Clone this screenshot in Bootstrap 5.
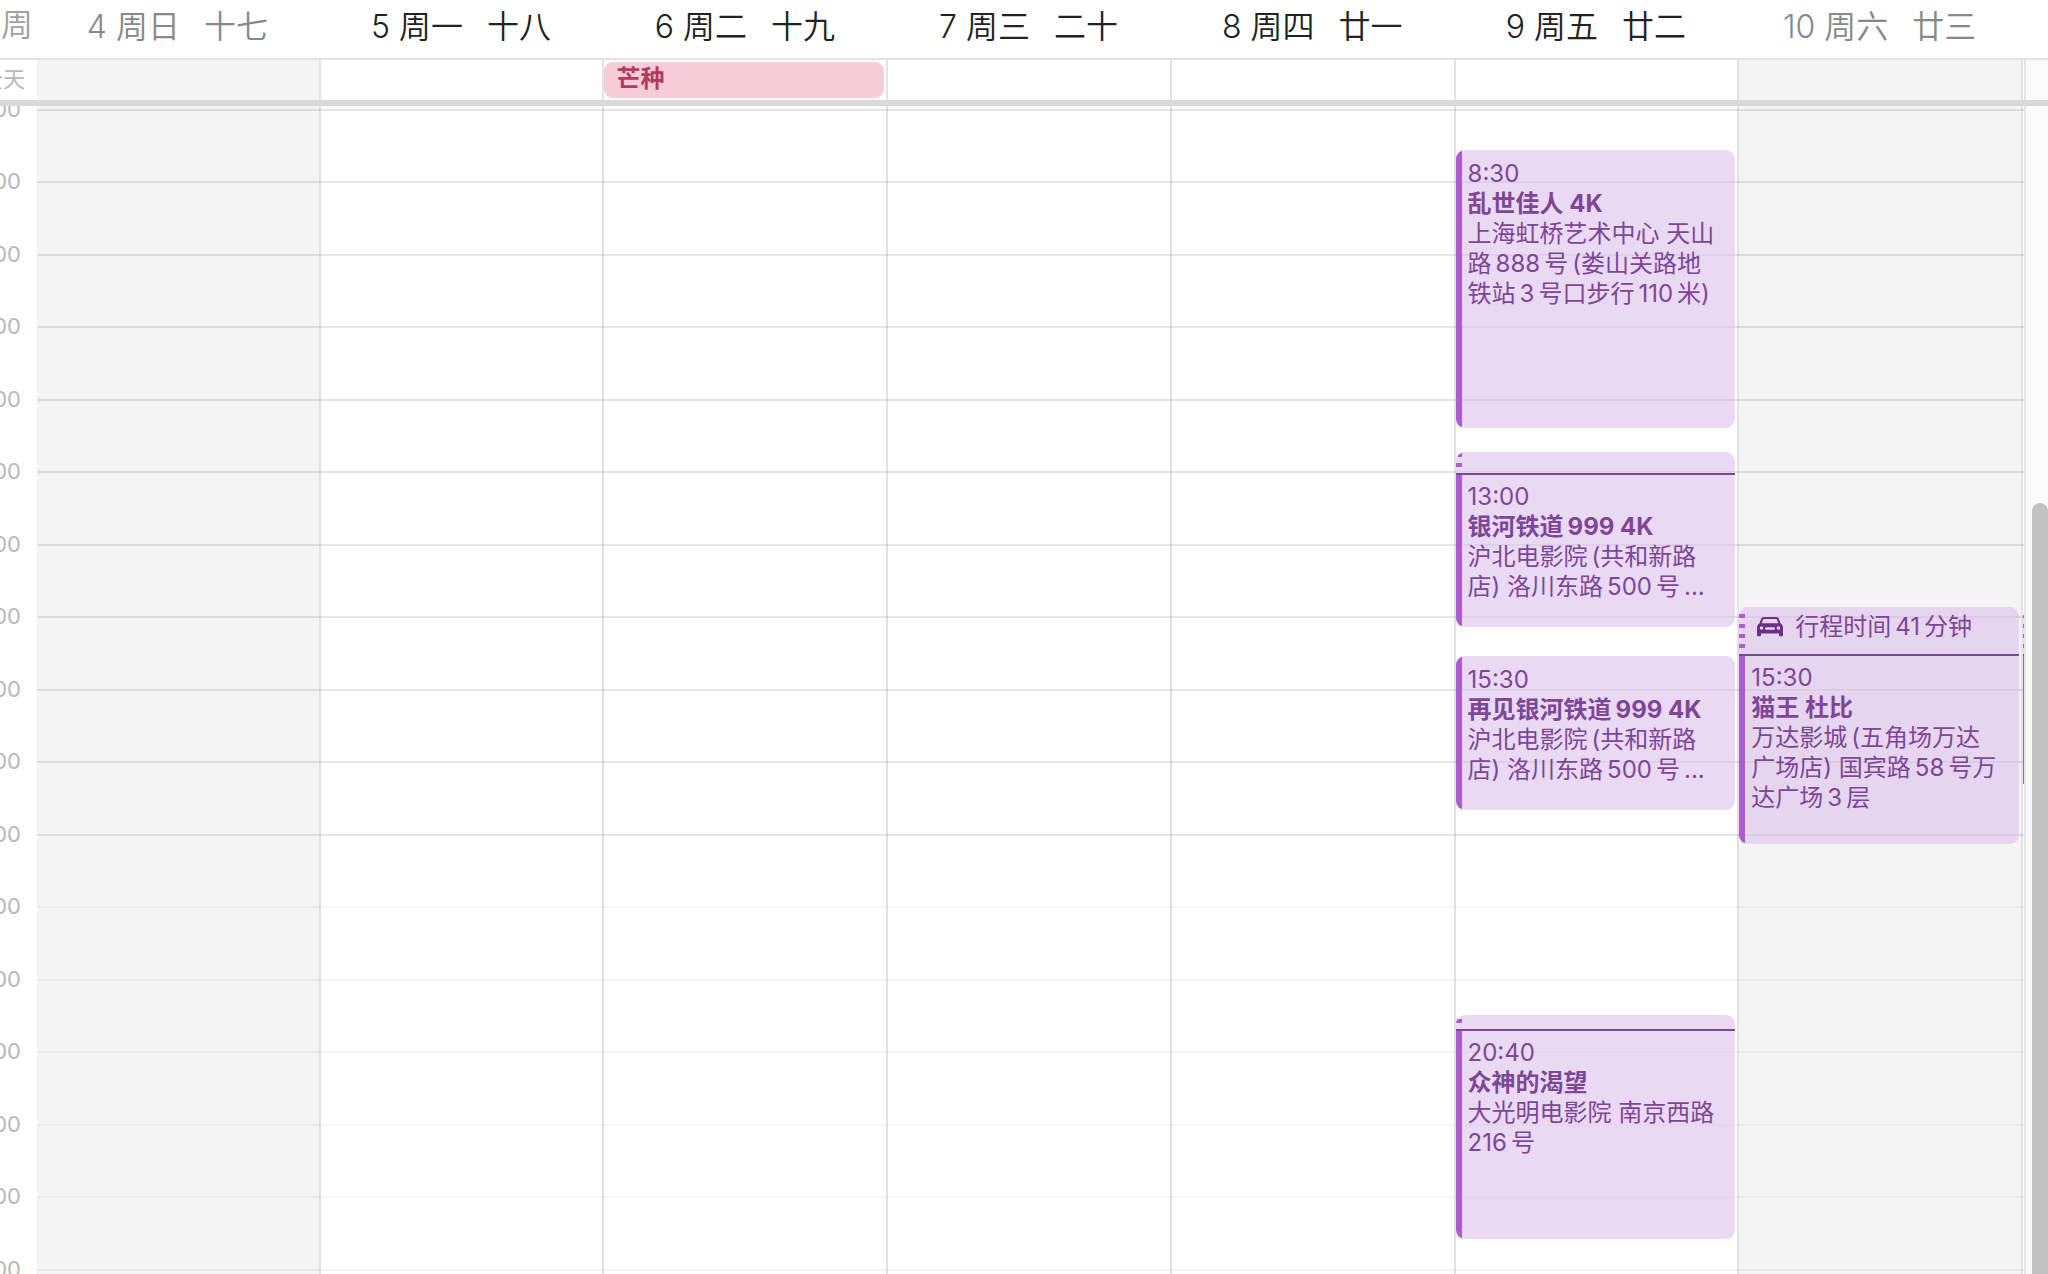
<!DOCTYPE html>
<html lang="zh-CN">
<head>
<meta charset="utf-8">
<meta name="viewport" content="width=device-width, initial-scale=1">
<title>日历</title>
<link href="https://cdn.jsdelivr.net/npm/bootstrap@5.3.0/dist/css/bootstrap.min.css" rel="stylesheet">
<style>
:root{--rule:#e3e3e3;--plum:#7d4698;--violet:#ac5cd0;--axis:37px;--track:22px}
body{font-family:Inter,"Noto Sans CJK SC",sans-serif;font-size:24px;line-height:30px;color:#222;background:#fff}
.axis{width:var(--axis);color:#b8b8b8;font-size:22px;white-space:nowrap}
.week-head{height:60px;font-size:32px;line-height:54px;font-weight:350;border-bottom:2px solid var(--rule);padding-right:25px}
.week-head .axis{font-size:32px;color:#a0a0a0;line-height:50px}
.week-head .off{color:#888}
.day-name{gap:24px;padding-right:3px}
.day{flex:1 1 0;min-width:0;border-right:2px solid #e2e2e2}
.day.off{background:#f4f4f4}
.next-day{width:3px;border-right:2px solid var(--rule)}
.track{width:var(--track);background:#fafafa}
.all-day{height:46px;border-bottom:6px solid #d9d9d9}
.all-day .axis{line-height:38px}
.chip{height:36px;margin:2px 2px 0 0;padding:0 12px;line-height:34px;border-radius:9px;background:#f7ccd9;color:#b33b5c;font-weight:700}
.hours{height:1232px;margin-top:3px;display:grid;grid-template:repeat(17,1fr)/minmax(0,1fr)}
.axis .hours>*{line-height:30px;margin-top:-15px}
.rules{left:var(--axis);right:24px}
.rules .hours>*{border-top:2px solid rgba(0,0,0,.1)}
.rules .hours>.late{border-color:rgba(0,0,0,.04)}
.event{position:relative;margin-right:2px;border-radius:9px;overflow:hidden;background:rgba(220,192,233,.6);color:var(--plum)}
.event-body{flex:1;border-left:6px solid var(--violet);padding:9px 0 0 6px;white-space:nowrap}
.travel{border-bottom:2px solid var(--plum);padding:5px 0 0 18px;gap:12px;white-space:nowrap;background:repeating-linear-gradient(to top,transparent 0 6px,var(--violet) 6px 10px) left/6px 100% no-repeat}
.travel+.event-body{padding-top:7px}
.thumb{margin:397px 0 0 6px;background:#c2c2c2;border-radius:8px 8px 0 0}
.sliver .travel{padding:0}
.sliver{width:1px;border-radius:0;margin:0}
</style>
<script src="https://cdn.jsdelivr.net/npm/bootstrap@5.3.0/dist/js/bootstrap.bundle.min.js"></script>
</head>
<body class="vh-100 overflow-hidden d-flex flex-column">
<header class="week-head d-flex flex-shrink-0">
  <div class="axis d-flex justify-content-end flex-shrink-0"><span class="me-1">周</span></div>
  <div class="col day-name off d-flex justify-content-center"><span>4 周日</span><span>十七</span></div>
  <div class="col day-name d-flex justify-content-center"><span>5 周一</span><span>十八</span></div>
  <div class="col day-name d-flex justify-content-center"><span>6 周二</span><span>十九</span></div>
  <div class="col day-name d-flex justify-content-center"><span>7 周三</span><span>二十</span></div>
  <div class="col day-name d-flex justify-content-center"><span>8 周四</span><span>廿一</span></div>
  <div class="col day-name d-flex justify-content-center"><span>9 周五</span><span>廿二</span></div>
  <div class="col day-name off d-flex justify-content-center"><span>10 周六</span><span>廿三</span></div>
</header>
<section class="all-day d-flex flex-shrink-0">
  <div class="axis d-flex justify-content-end flex-shrink-0 pe-2"><span class="me-1">全天</span></div>
  <div class="day off"></div><div class="day"></div>
  <div class="day"><div class="chip">芒种</div></div>
  <div class="day"></div><div class="day"></div><div class="day"></div><div class="day off"></div>
  <div class="next-day"></div><div class="track"></div>
</section>
<main class="flex-grow-1 d-flex position-relative overflow-hidden">
  <div class="axis flex-shrink-0">
    <div class="hours">
      <div class="d-flex justify-content-end pe-3"><span>8:00</span></div>
      <div class="d-flex justify-content-end pe-3"><span>9:00</span></div>
      <div class="d-flex justify-content-end pe-3"><span>10:00</span></div>
      <div class="d-flex justify-content-end pe-3"><span>11:00</span></div>
      <div class="d-flex justify-content-end pe-3"><span>12:00</span></div>
      <div class="d-flex justify-content-end pe-3"><span>13:00</span></div>
      <div class="d-flex justify-content-end pe-3"><span>14:00</span></div>
      <div class="d-flex justify-content-end pe-3"><span>15:00</span></div>
      <div class="d-flex justify-content-end pe-3"><span>16:00</span></div>
      <div class="d-flex justify-content-end pe-3"><span>17:00</span></div>
      <div class="d-flex justify-content-end pe-3"><span>18:00</span></div>
      <div class="d-flex justify-content-end pe-3"><span>19:00</span></div>
      <div class="d-flex justify-content-end pe-3"><span>20:00</span></div>
      <div class="d-flex justify-content-end pe-3"><span>21:00</span></div>
      <div class="d-flex justify-content-end pe-3"><span>22:00</span></div>
      <div class="d-flex justify-content-end pe-3"><span>23:00</span></div>
      <div class="d-flex justify-content-end pe-3"><span>0:00</span></div>
    </div>
  </div>
  <div class="rules position-absolute top-0">
    <div class="hours">
      <div></div><div></div><div></div><div></div><div></div><div></div><div></div><div></div><div></div><div></div><div></div>
      <div class="late"></div><div class="late"></div><div class="late"></div><div class="late"></div><div class="late"></div><div class="late"></div>
    </div>
  </div>
  <div class="day off"></div><div class="day"></div><div class="day"></div><div class="day"></div><div class="day"></div>
  <div class="day">
    <article class="event d-flex flex-column" style="margin-top:44px;height:278px">
      <div class="event-body">8:30<br><b>乱世佳人 4K</b><br>上海虹桥艺术中心 天山<br>路<span class="mx-1">888</span>号<span class="ms-1">(</span>娄山关路地<br>铁站<span class="mx-1">3</span>号口步行<span class="mx-1">110</span>米)</div>
    </article>
    <article class="event d-flex flex-column" style="margin-top:24px;height:175px">
      <div class="travel" style="height:23px"></div>
      <div class="event-body">13:00<br><b>银河铁道<span class="ms-1">999</span> 4K</b><br>沪北电影院<span class="ms-1">(</span>共和新路<br>店) 洛川东路<span class="mx-1">500</span>号<span class="ms-1">...</span></div>
    </article>
    <article class="event d-flex flex-column" style="margin-top:29px;height:154px">
      <div class="event-body">15:30<br><b>再见银河铁道<span class="ms-1">999</span> 4K</b><br>沪北电影院<span class="ms-1">(</span>共和新路<br>店) 洛川东路<span class="mx-1">500</span>号<span class="ms-1">...</span></div>
    </article>
    <article class="event d-flex flex-column" style="margin-top:205px;height:224px">
      <div class="travel" style="height:16px"></div>
      <div class="event-body">20:40<br><b>众神的渴望</b><br>大光明电影院 南京西路<br>216<span class="ms-1">号</span></div>
    </article>
  </div>
  <div class="day off">
    <article class="event d-flex flex-column" style="margin-top:501px;height:237px">
      <div class="travel d-flex" style="height:49px">
        <svg class="mt-1" width="26" height="22" viewBox="0 0 26 22" aria-hidden="true"><path fill="#6b2f86" fill-rule="evenodd" d="M7 1h12c1.500 0 2.500.8 3 2.200l1.600 4.300C25.300 8.500 26 9.800 26 11.500V19c0 .8-.5 1.300-1.300 1.300h-1.400c-.8 0-1.300-.5-1.300-1.300v-1.500H4V19c0 .8-.5 1.300-1.300 1.300H1.300C.5 20.300 0 19.800 0 19v-7.500c0-1.700.7-3 2.400-4L4 3.200C4.500 1.800 5.500 1 7 1zm.2 2c-.7 0-1.100.3-1.300.9L4.700 7.200h16.600l-1.200-3.300c-.2-.6-.6-.9-1.300-.9zM4.500 10.300a1.700 1.700 0 1 0 0 3.400 1.700 1.700 0 0 0 0-3.400zm17 0a1.700 1.700 0 1 0 0 3.400 1.700 1.700 0 0 0 0-3.400zM9.300 11.200a1.200 1.200 0 0 0 0 2.500h7.400a1.200 1.200 0 0 0 0-2.500z"/></svg>
        <span>行程时间<span class="mx-1">41</span>分钟</span>
      </div>
      <div class="event-body">15:30<br><b>猫王 杜比</b><br>万达影城<span class="ms-1">(</span>五角场万达<br>广场店) 国宾路<span class="mx-1">58</span>号万<br>达广场<span class="mx-1">3</span>层</div>
    </article>
  </div>
  <div class="next-day">
    <div class="event sliver d-flex flex-column" style="margin-top:509px;height:169px"><div class="travel" style="height:41px"></div><div class="event-body"></div></div>
  </div>
  <div class="track d-flex"><div class="thumb flex-grow-1"></div></div>
</main>
</body>
</html>
